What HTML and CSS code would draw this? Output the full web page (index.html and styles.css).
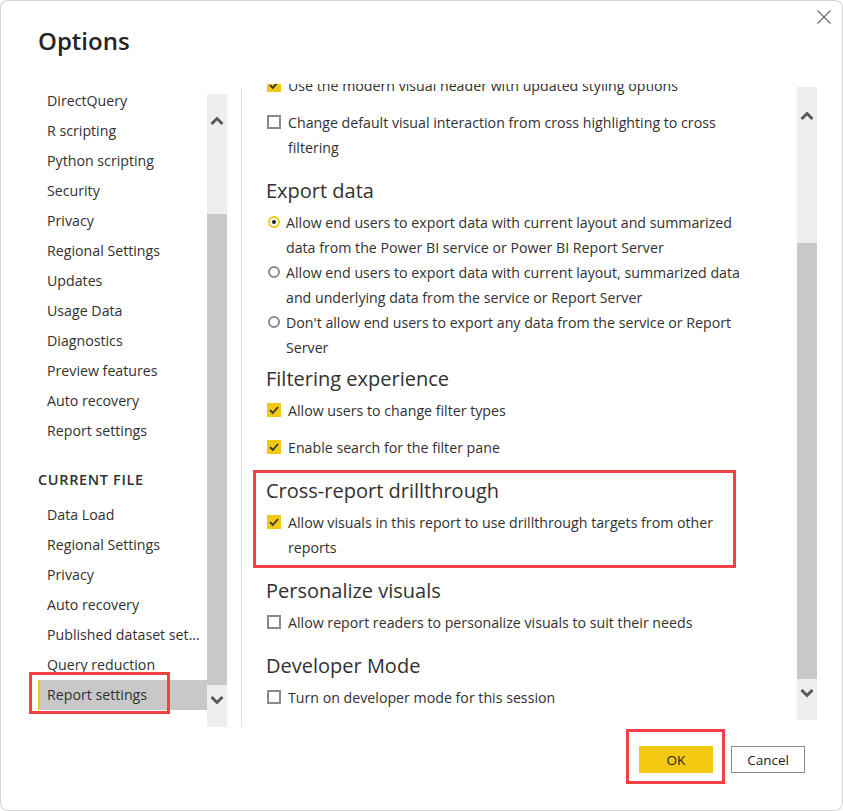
FILE: index.html
```html
<!DOCTYPE html>
<html lang="en">
<head>
<meta charset="utf-8">
<title>Options</title>
<link rel="stylesheet" href="styles.css">
</head>
<body>
<div class="dialog">
  <header class="head">
    <h1 class="title">Options</h1>
    <button class="close" aria-label="Close">
      <svg width="14" height="14" viewBox="0 0 14 14"><path d="M0.5 0.5 L13.5 13.5 M13.5 0.5 L0.5 13.5" stroke="#666" stroke-width="1.1" fill="none"/></svg>
    </button>
  </header>

  <main class="main">
    <nav class="nav">
      <ul class="nav-list">
        <li class="nav-item">DirectQuery</li>
        <li class="nav-item">R scripting</li>
        <li class="nav-item">Python scripting</li>
        <li class="nav-item">Security</li>
        <li class="nav-item">Privacy</li>
        <li class="nav-item">Regional Settings</li>
        <li class="nav-item">Updates</li>
        <li class="nav-item">Usage Data</li>
        <li class="nav-item">Diagnostics</li>
        <li class="nav-item">Preview features</li>
        <li class="nav-item">Auto recovery</li>
        <li class="nav-item">Report settings</li>
      </ul>
      <div class="nav-group">CURRENT FILE</div>
      <ul class="nav-list">
        <li class="nav-item">Data Load</li>
        <li class="nav-item">Regional Settings</li>
        <li class="nav-item">Privacy</li>
        <li class="nav-item">Auto recovery</li>
        <li class="nav-item">Published dataset set...</li>
        <li class="nav-item">Query reduction</li>
        <li class="nav-item nav-item--active annot annot--nav">Report settings</li>
      </ul>
    </nav>

    <div class="scrollbar scrollbar--nav">
      <span class="sb-btn sb-btn--up"><svg width="14" height="9" viewBox="0 0 14 9"><polyline points="1.5,8 7,2.5 12.5,8" fill="none" stroke="#5a5a5a" stroke-width="3"/></svg></span>
      <span class="sb-gap"></span>
      <span class="sb-thumb"></span>
      <span class="sb-btn sb-btn--down"><svg width="14" height="9" viewBox="0 0 14 9"><polyline points="1.5,1 7,6.5 12.5,1" fill="none" stroke="#5a5a5a" stroke-width="3"/></svg></span>
    </div>

    <div class="divider"></div>

    <section class="pane">
      <div class="pane-content">
        <label class="opt"><span class="box box--on"><svg width="14" height="14" viewBox="0 0 14 14"><polyline points="3,7.2 5.8,10 11,4" fill="none" stroke="#333" stroke-width="1.8"/></svg></span><span class="opt-text">Use the modern visual header with updated styling options</span></label>
        <label class="opt"><span class="box"></span><span class="opt-text">Change default visual interaction from cross highlighting to cross<br>filtering</span></label>

        <h2 class="sec-title">Export data</h2>
        <label class="radio"><span class="dot dot--on"></span><span class="opt-text">Allow end users to export data with current layout and summarized<br>data from the Power BI service or Power BI Report Server</span></label>
        <label class="radio"><span class="dot"></span><span class="opt-text">Allow end users to export data with current layout, summarized data<br>and underlying data from the service or Report Server</span></label>
        <label class="radio"><span class="dot"></span><span class="opt-text">Don't allow end users to export any data from the service or Report<br>Server</span></label>

        <h2 class="sec-title">Filtering experience</h2>
        <label class="opt"><span class="box box--on"><svg width="14" height="14" viewBox="0 0 14 14"><polyline points="3,7.2 5.8,10 11,4" fill="none" stroke="#333" stroke-width="1.8"/></svg></span><span class="opt-text">Allow users to change filter types</span></label>
        <label class="opt"><span class="box box--on"><svg width="14" height="14" viewBox="0 0 14 14"><polyline points="3,7.2 5.8,10 11,4" fill="none" stroke="#333" stroke-width="1.8"/></svg></span><span class="opt-text">Enable search for the filter pane</span></label>

        <div class="annot annot--section">
          <h2 class="sec-title">Cross-report drillthrough</h2>
          <label class="opt"><span class="box box--on"><svg width="14" height="14" viewBox="0 0 14 14"><polyline points="3,7.2 5.8,10 11,4" fill="none" stroke="#333" stroke-width="1.8"/></svg></span><span class="opt-text">Allow visuals in this report to use drillthrough targets from other<br>reports</span></label>
        </div>

        <h2 class="sec-title">Personalize visuals</h2>
        <label class="opt"><span class="box"></span><span class="opt-text">Allow report readers to personalize visuals to suit their needs</span></label>

        <h2 class="sec-title">Developer Mode</h2>
        <label class="opt"><span class="box"></span><span class="opt-text">Turn on developer mode for this session</span></label>
      </div>
    </section>

    <div class="scrollbar scrollbar--pane">
      <span class="sb-btn sb-btn--up"><svg width="14" height="9" viewBox="0 0 14 9"><polyline points="1.5,8 7,2.5 12.5,8" fill="none" stroke="#5a5a5a" stroke-width="3"/></svg></span>
      <span class="sb-gap"></span>
      <span class="sb-thumb"></span>
      <span class="sb-btn sb-btn--down"><svg width="14" height="9" viewBox="0 0 14 9"><polyline points="1.5,1 7,6.5 12.5,1" fill="none" stroke="#5a5a5a" stroke-width="3"/></svg></span>
    </div>
  </main>

  <footer class="foot">
    <button class="btn btn--ok annot annot--ok">OK</button>
    <button class="btn btn--cancel">Cancel</button>
  </footer>
</div>
</body>
</html>
```

FILE: styles.css
```css
* { box-sizing: border-box; }

html, body {
  margin: 0;
  padding: 0;
  background: #ffffff;
}

body {
  font-family: "Open Sans", "Noto Sans", "DejaVu Sans", sans-serif;
  color: #323130;
  font-size: 14.2px;
}

.dialog {
  width: 843px;
  height: 811px;
  border-radius: 8px;
  box-shadow: inset 0 0 0 1px #d4d4d4;
  background: #fff;
  display: flex;
  flex-direction: column;
  overflow: hidden;
}

/* header */
.head {
  height: 80px;
  flex: none;
  display: flex;
  justify-content: space-between;
  align-items: flex-start;
  padding: 0 12px 0 38px;
}

.title {
  margin: 25px 0 0;
  font-size: 24px;
  line-height: 32px;
  font-weight: 600;
  color: #252423;
}

.close {
  margin-top: 10px;
  padding: 0;
  border: 0;
  background: none;
  width: 14px;
  height: 14px;
  display: block;
}
.close svg { display: block; }

/* main */
.main {
  height: 647px;
  flex: none;
  display: flex;
  align-items: stretch;
}

.nav {
  width: 207px;
  flex: none;
  padding: 6px 0 0 38px;
}

.nav-list {
  list-style: none;
  margin: 0;
  padding: 0;
}

.nav-item {
  height: 30px;
  line-height: 30px;
  padding-left: 9px;
  white-space: nowrap;
  color: #323130;
}

.nav-item--active {
  background: #c8c8c8;
  border-left: 2px solid #f2c811;
  padding-left: 7px;
}

.nav-group {
  margin-top: 20px;
  height: 28px;
  line-height: 28px;
  margin-bottom: 6px;
  font-weight: 600;
  font-size: 14.5px;
  letter-spacing: 0.65px;
  color: #323130;
}

/* scrollbars */
.scrollbar {
  width: 20px;
  flex: none;
  display: flex;
  flex-direction: column;
  background: #eeeeee;
}

.scrollbar--nav {
  margin-top: 14px;
}

.scrollbar--pane {
  margin-top: 7px;
  margin-bottom: 7px;
}

.sb-btn {
  flex: none;
  display: flex;
  justify-content: center;
}
.sb-btn svg { display: block; }

.scrollbar--nav .sb-btn--up { height: 52px; padding-top: 22px; }
.scrollbar--nav .sb-gap { height: 68px; flex: none; }
.scrollbar--nav .sb-btn--down { height: 42px; padding-top: 11px; }

.scrollbar--pane .sb-btn--up { height: 56px; padding-top: 24px; }
.scrollbar--pane .sb-gap { height: 100px; flex: none; }
.scrollbar--pane .sb-btn--down { height: 41px; padding-top: 10px; }

.sb-thumb {
  flex: 1;
  background: #c8c8c8;
}

.divider {
  width: 1px;
  flex: none;
  margin-left: 14px;
  margin-top: 7px;
  background: #e1e1e1;
}

/* content pane */
.pane {
  width: 555px;
  flex: none;
  margin-top: 4px;
  overflow: hidden;
}

.pane-content {
  padding-left: 24px;
  margin-top: -11.5px;
}

.sec-title {
  margin: 0 0 4px;
  padding-top: 3.5px;
  height: 33.5px;
  line-height: 30px;
  font-size: 20px;
  font-weight: 400;
  color: #323130;
  white-space: nowrap;
}

.opt, .radio {
  display: flex;
  align-items: flex-start;
  line-height: 25px;
  white-space: nowrap;
}

.opt { margin-bottom: 12.5px; }

.box {
  flex: none;
  width: 14px;
  height: 14px;
  margin: 5px 7px 0 1px;
  border: 2px solid #8a8a8a;
  background: #fff;
}

.box--on {
  border: 0;
  background: #f2c811;
}
.box svg { display: block; }

.dot {
  flex: none;
  width: 12px;
  height: 12px;
  margin: 6px 6px 0 2px;
  border-radius: 50%;
  border: 2px solid #8a8a8a;
  background: #fff;
  display: flex;
  align-items: center;
  justify-content: center;
}

.dot--on { border-color: #f2c811; }
.dot--on::before {
  content: "";
  width: 4px;
  height: 4px;
  border-radius: 50%;
  background: #252423;
}

/* footer */
.foot {
  flex: 1;
  display: flex;
  justify-content: flex-end;
  align-items: flex-start;
  gap: 18px;
  padding: 19px 38px 0 0;
}

.btn {
  width: 74px;
  height: 27px;
  font-family: inherit;
  font-size: 13.5px;
  color: #252423;
  padding: 0;
  margin: 0;
}

.btn--ok {
  background: #f2c811;
  border: 0;
}

.btn--cancel {
  background: #fff;
  border: 1px solid #8a8886;
}

/* red annotation boxes */
.annot { position: relative; }
.annot::after {
  content: "";
  position: absolute;
  border: 3px solid #ef4146;
  pointer-events: none;
}

.annot--nav::after {
  left: -11px;
  right: 37px;
  top: -8px;
  bottom: -4px;
}

.annot--section {
  margin-right: 61px;
}
.annot--section::after {
  left: -13px;
  right: 0;
  top: -2.5px;
  bottom: -8px;
}

.annot--ok::after {
  left: -13px;
  right: -12px;
  top: -17px;
  bottom: -11px;
}
```
